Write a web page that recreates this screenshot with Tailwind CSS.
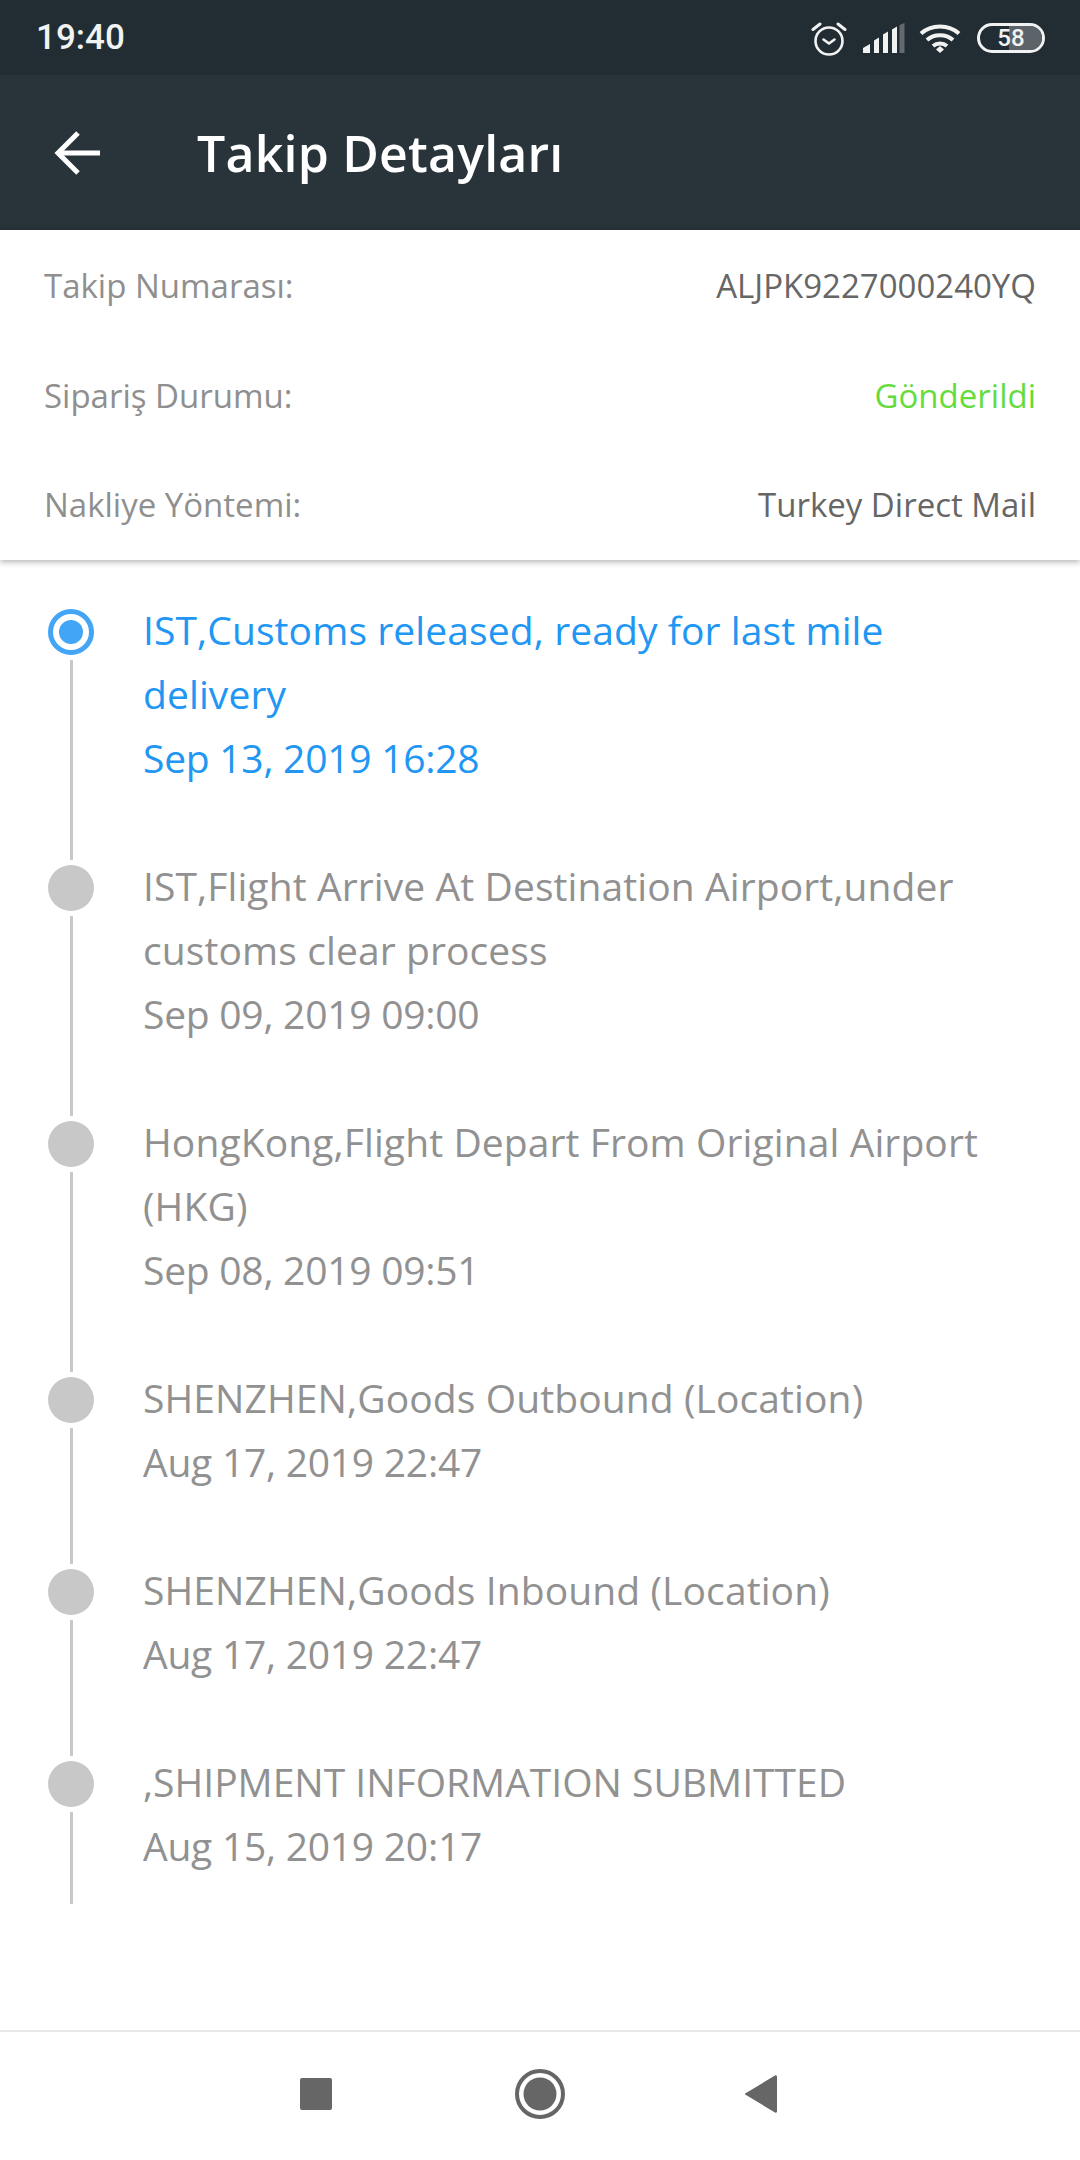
<!DOCTYPE html>
<html lang="tr">
<head>
  <meta charset="UTF-8">
  <meta name="viewport" content="width=device-width, initial-scale=1">
  <title>Takip Detayları</title>
  <script src="https://cdn.jsdelivr.net/npm/@tailwindcss/browser@4"></script>
</head>
<body class="bg-white font-['Open_Sans',sans-serif] w-[1080px] h-[2160px] flex flex-col overflow-hidden">
  <!-- Status bar -->
  <div class="h-[75px] bg-[#222d33] flex items-center justify-between pl-[36px] pr-[35px] text-[#f1f2f2]">
    <span class="font-['Roboto',sans-serif] font-medium text-[35px] leading-none">19:40</span>
    <div class="flex items-center">
      <svg width="36" height="36" viewBox="0 0 36 36" fill="none" stroke="#f1f2f2" stroke-width="2.6" stroke-linecap="round" stroke-linejoin="round">
        <circle cx="18" cy="21" r="13.5"/>
        <path d="M12.5 19.5l5.5 4 5.5-4"/>
        <path d="M2 9.5L9 4M34 9.5L27 4" stroke-width="3"/>
      </svg>
      <svg class="ml-[15px]" width="43" height="30" viewBox="0 0 43 30" fill="#f1f2f2">
        <path d="M1 30v-5l7-4v9z"/>
        <path d="M12 30V17.500l5-3V30z"/>
        <path d="M21 30V11.500l5-3V30z"/>
        <path d="M30 30V6.500l5-3V30z"/>
        <path d="M37.500 30V2l5-2V30z" fill="#646b70"/>
      </svg>
      <svg class="ml-[14px]" width="42" height="30" viewBox="0 0 42 30" fill="none" stroke="#f1f2f2" stroke-width="4">
        <path d="M2 10.500C12 1 30 1 40 10.500"/>
        <path d="M8 17C15 10.500 27 10.500 34 17"/>
        <path d="M14 23C18 19.500 24 19.500 28 23"/>
        <path d="M17 26.500L21 23l4 3.500-4 3.500z" fill="#f1f2f2" stroke="none"/>
      </svg>
      <div class="ml-[16px] relative w-[68px] h-[30px] rounded-full border-[3px] border-[#f1f2f2] overflow-hidden flex items-center justify-center">
        <div class="absolute right-0 top-0 bottom-0 w-[33px] bg-[#5c6469]"></div>
        <span class="relative font-['Roboto',sans-serif] font-medium text-[24px] leading-none">58</span>
      </div>
    </div>
  </div>

  <!-- Toolbar -->
  <div class="h-[155px] bg-[#28333a] flex items-center text-white">
    <svg class="ml-[54px]" width="46" height="44" viewBox="0 0 46 44" fill="none" stroke="#ffffff" stroke-width="5">
      <path d="M24 2L4 22l20 20"/>
      <path d="M5 22h41"/>
    </svg>
    <h1 class="ml-[97px] text-[50px] font-semibold leading-none tracking-[0.2px]">Takip Detayları</h1>
  </div>

  <!-- Info rows -->
  <div class="h-[330px] px-[44px] pt-[1px] flex flex-col shadow-[0_2px_6px_rgba(0,0,0,0.3)] relative text-[33px]">
    <div class="h-[110px] flex items-center justify-between">
      <span class="text-[#8f8f8f]">Takip Numarası:</span>
      <span class="text-[#666666]">ALJPK9227000240YQ</span>
    </div>
    <div class="h-[110px] flex items-center justify-between">
      <span class="text-[#8f8f8f]">Sipariş Durumu:</span>
      <span class="text-[#63dc3c]">Gönderildi</span>
    </div>
    <div class="h-[110px] flex items-center justify-between">
      <span class="text-[#8f8f8f]">Nakliye Yöntemi:</span>
      <span class="text-[#666666]">Turkey Direct Mail</span>
    </div>
  </div>

  <!-- Timeline -->
  <div class="flex-1 pt-[38px] pl-[48px] pr-[60px] text-[39px] leading-[64px] text-[#919191]">
    <div class="flex pb-[64px]">
      <div class="w-[46px] shrink-0 flex flex-col items-center pt-[11px] -mb-[70px]">
        <div class="w-[46px] h-[46px] rounded-full border-[5px] border-[#42a5f5] flex items-center justify-center">
          <div class="w-[24px] h-[24px] rounded-full bg-[#42a5f5]"></div>
        </div>
        <div class="w-[3px] flex-1 bg-[#c8c8c8] mt-[5px]"></div>
      </div>
      <div class="ml-[49px] text-[#2196f3]">
        <p class="tracking-[0.1px]">IST,Customs released, ready for last mile delivery</p>
        <p class="tracking-[-0.25px]">Sep 13, 2019 16:28</p>
      </div>
    </div>

    <div class="flex pb-[64px]">
      <div class="w-[46px] shrink-0 flex flex-col items-center pt-[11px] -mb-[70px]">
        <div class="w-[46px] h-[46px] rounded-full bg-[#c8c8c8]"></div>
        <div class="w-[3px] flex-1 bg-[#c8c8c8] mt-[5px]"></div>
      </div>
      <div class="ml-[49px]">
        <p class="tracking-[0.1px]">IST,Flight Arrive At Destination Airport,under customs clear process</p>
        <p class="tracking-[-0.25px]">Sep 09, 2019 09:00</p>
      </div>
    </div>

    <div class="flex pb-[64px]">
      <div class="w-[46px] shrink-0 flex flex-col items-center pt-[11px] -mb-[70px]">
        <div class="w-[46px] h-[46px] rounded-full bg-[#c8c8c8]"></div>
        <div class="w-[3px] flex-1 bg-[#c8c8c8] mt-[5px]"></div>
      </div>
      <div class="ml-[49px]">
        <p class="tracking-[0.1px]">HongKong,Flight Depart From Original Airport (HKG)</p>
        <p class="tracking-[-0.25px]">Sep 08, 2019 09:51</p>
      </div>
    </div>

    <div class="flex pb-[64px]">
      <div class="w-[46px] shrink-0 flex flex-col items-center pt-[11px] -mb-[70px]">
        <div class="w-[46px] h-[46px] rounded-full bg-[#c8c8c8]"></div>
        <div class="w-[3px] flex-1 bg-[#c8c8c8] mt-[5px]"></div>
      </div>
      <div class="ml-[49px]">
        <p class="tracking-[0.1px]">SHENZHEN,Goods Outbound (Location)</p>
        <p class="tracking-[-0.25px]">Aug 17, 2019 22:47</p>
      </div>
    </div>

    <div class="flex pb-[64px]">
      <div class="w-[46px] shrink-0 flex flex-col items-center pt-[11px] -mb-[70px]">
        <div class="w-[46px] h-[46px] rounded-full bg-[#c8c8c8]"></div>
        <div class="w-[3px] flex-1 bg-[#c8c8c8] mt-[5px]"></div>
      </div>
      <div class="ml-[49px]">
        <p class="tracking-[0.1px]">SHENZHEN,Goods Inbound (Location)</p>
        <p class="tracking-[-0.25px]">Aug 17, 2019 22:47</p>
      </div>
    </div>

    <div class="flex">
      <div class="w-[46px] shrink-0 flex flex-col items-center pt-[11px] -mb-[26px]">
        <div class="w-[46px] h-[46px] rounded-full bg-[#c8c8c8]"></div>
        <div class="w-[3px] flex-1 bg-[#c8c8c8] mt-[5px]"></div>
      </div>
      <div class="ml-[49px]">
        <p>,SHIPMENT INFORMATION SUBMITTED</p>
        <p class="tracking-[-0.25px]">Aug 15, 2019 20:17</p>
      </div>
    </div>
  </div>

  <!-- Android nav bar -->
  <div class="h-[130px] border-t-[2px] border-[#e8e8e8] flex items-center justify-center pb-[4px] pr-[3px]">
    <div class="w-[32px] h-[32px] rounded-[2px] bg-[#666666]"></div>
    <svg class="ml-[183px]" width="50" height="50" viewBox="0 0 50 50">
      <circle cx="25" cy="25" r="23" fill="none" stroke="#666666" stroke-width="4"/>
      <circle cx="25" cy="25" r="16.500" fill="#666666"/>
    </svg>
    <svg class="ml-[180px]" width="32" height="38" viewBox="0 0 32 38" fill="#666666">
      <path d="M30 0.500L1 18a1 1 0 0 0 0 2L30 37.500a1.500 1.500 0 0 0 2-1V1.500a1.500 1.500 0 0 0-2-1z"/>
    </svg>
  </div>
</body>
</html>
